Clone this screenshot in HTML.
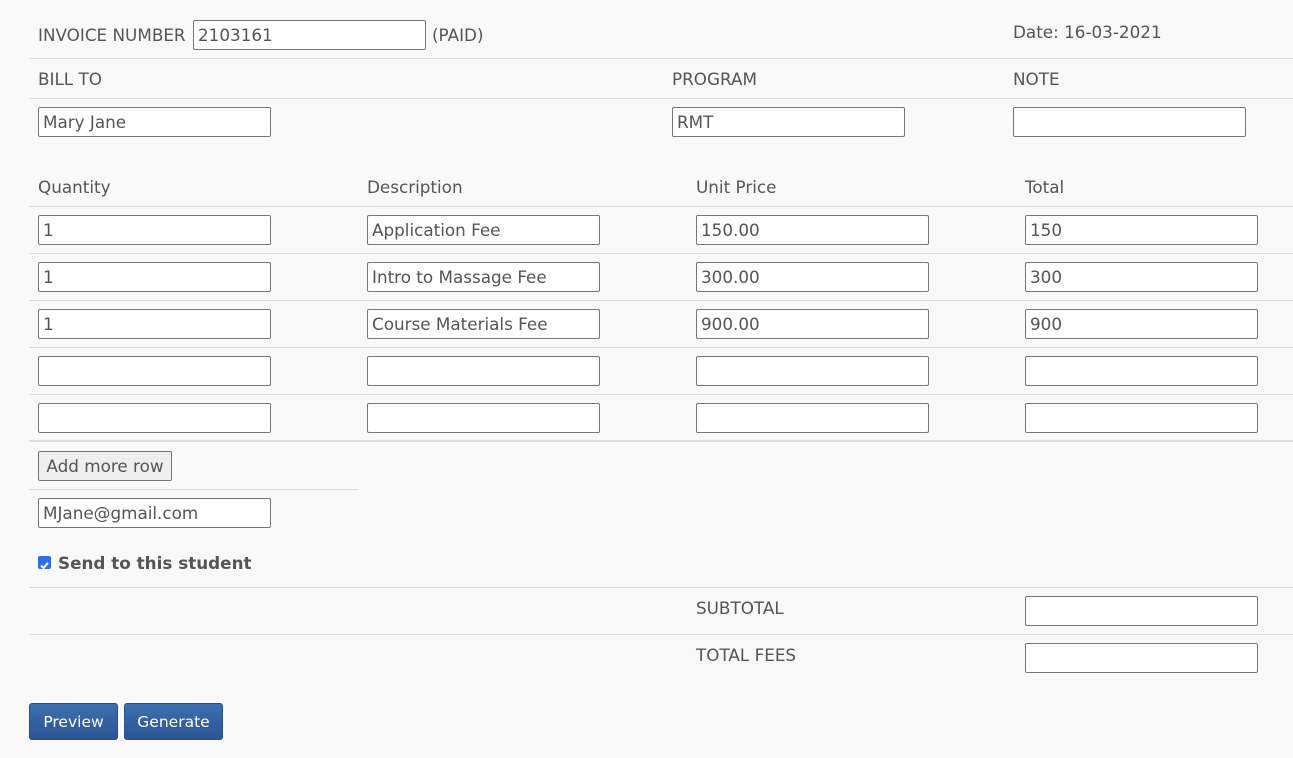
<!DOCTYPE html>
<html><head><meta charset="utf-8"><style>
body{margin:0;width:1293px;height:758px;background:#f9f9f9;font-family:"DejaVu Sans","Liberation Sans",sans-serif;font-size:16.8px;color:#555;position:relative;overflow:hidden}
.t{position:absolute;line-height:20px;white-space:nowrap}
.i{position:absolute;box-sizing:border-box;width:233px;height:30px;background:#fff;border:1px solid #767676;border-radius:2px;padding:0 4px;line-height:29px;font-size:16.8px;color:#555;white-space:nowrap}
.l{position:absolute;left:29px;right:0;height:1px;background:#ddd}
.b{position:absolute;top:703px;height:37px;box-sizing:border-box;border-radius:3px;background:linear-gradient(#3d6fb0,#2a5592);color:#fff;font-size:15.5px;line-height:37px;text-align:center;border:1px solid #2a4f86}
</style></head><body>
<div class="t" style="left:38px;top:25px">INVOICE NUMBER</div>
<div class="i" style="left:193px;top:20px">2103161</div>
<div class="t" style="left:432px;top:25px">(PAID)</div>
<div class="t" style="left:1013px;top:22px">Date: 16-03-2021</div>
<div class="l" style="top:58px"></div>
<div class="t" style="left:38px;top:69px">BILL TO</div>
<div class="t" style="left:672px;top:69px">PROGRAM</div>
<div class="t" style="left:1013px;top:69px">NOTE</div>
<div class="l" style="top:98px"></div>
<div class="i" style="left:38px;top:107px">Mary Jane</div>
<div class="i" style="left:672px;top:107px">RMT</div>
<div class="i" style="left:1013px;top:107px"></div>
<div class="t" style="left:38px;top:177px">Quantity</div>
<div class="t" style="left:367px;top:177px">Description</div>
<div class="t" style="left:696px;top:177px">Unit Price</div>
<div class="t" style="left:1025px;top:177px">Total</div>
<div class="l" style="top:206px"></div>
<div class="i" style="left:38px;top:215px">1</div><div class="i" style="left:367px;top:215px">Application Fee</div><div class="i" style="left:696px;top:215px">150.00</div><div class="i" style="left:1025px;top:215px">150</div>
<div class="l" style="top:253px"></div>
<div class="i" style="left:38px;top:262px">1</div><div class="i" style="left:367px;top:262px">Intro to Massage Fee</div><div class="i" style="left:696px;top:262px">300.00</div><div class="i" style="left:1025px;top:262px">300</div>
<div class="l" style="top:300px"></div>
<div class="i" style="left:38px;top:309px">1</div><div class="i" style="left:367px;top:309px">Course Materials Fee</div><div class="i" style="left:696px;top:309px">900.00</div><div class="i" style="left:1025px;top:309px">900</div>
<div class="l" style="top:347px"></div>
<div class="i" style="left:38px;top:356px"></div><div class="i" style="left:367px;top:356px"></div><div class="i" style="left:696px;top:356px"></div><div class="i" style="left:1025px;top:356px"></div>
<div class="l" style="top:394px"></div>
<div class="i" style="left:38px;top:403px"></div><div class="i" style="left:367px;top:403px"></div><div class="i" style="left:696px;top:403px"></div><div class="i" style="left:1025px;top:403px"></div>
<div class="l" style="top:440px;height:2px"></div>
<div style="position:absolute;left:38px;top:451px;width:134px;height:30px;box-sizing:border-box;border:1px solid #767676;border-radius:2px;background:#efefef;text-align:center;line-height:29px;color:#555;white-space:nowrap">Add more row</div>
<div class="l" style="top:489px;right:auto;width:329px"></div>
<div class="i" style="left:38px;top:498px">MJane@gmail.com</div>
<div style="position:absolute;left:38px;top:556px;width:13px;height:13px;background:#2f6ee8;border-radius:2px"><svg width="13" height="13" viewBox="0 0 13 13"><path d="M3 6.5L5.5 9L10 3.8" stroke="#fff" stroke-width="2" fill="none"/></svg></div>
<div class="t" style="left:58px;top:553px;font-weight:bold">Send to this student</div>
<div class="l" style="top:587px"></div>
<div class="t" style="left:696px;top:598px">SUBTOTAL</div>
<div class="i" style="left:1025px;top:596px"></div>
<div class="l" style="top:634px"></div>
<div class="t" style="left:696px;top:645px">TOTAL FEES</div>
<div class="i" style="left:1025px;top:643px"></div>
<div class="b" style="left:29px;width:89px">Preview</div>
<div class="b" style="left:124px;width:99px">Generate</div>
</body></html>
